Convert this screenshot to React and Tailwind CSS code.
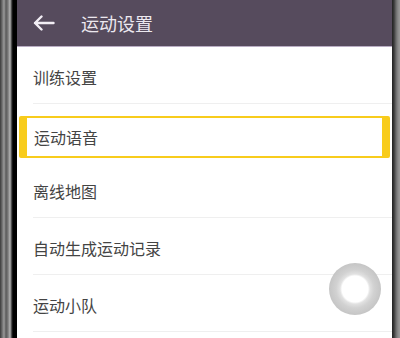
const items = ['训练设置', '运动语音', '离线地图', '自动生成运动记录', '运动小队']

export default function App() {
  return (
    <div className="flex w-[400px] h-[338px] overflow-hidden bg-black" style={{ fontFamily: '"Noto Sans CJK SC", "Noto Sans", sans-serif' }}>
      {/* left bezel */}
      <div className="w-[17px] h-full bg-[linear-gradient(to_right,#3a3a3a_0px,#6a6a6a_2px,#9a9a9a_4px,#5a5a5a_6px,#7a7a7a_8px,#b5b5b5_10px,#2a2a2a_12px,#000_13px,#000_17px)]" />

      {/* screen */}
      <div className="relative flex-1 h-full bg-white flex flex-col">
        <div className="h-[47px] shrink-0 bg-[#564b5d] border-b border-[#b9adc4] flex items-center">
          <svg className="ml-[16px]" width="22" height="16" viewBox="0 0 22 16" fill="none" stroke="#f2eef5" strokeWidth="2.4" strokeLinecap="round" strokeLinejoin="round">
            <path d="M20.5 8H2M8.5 1.5L2 8l6.5 6.5" />
          </svg>
          <span className="ml-[26px] text-[18px] text-[#ece8ef] leading-none">运动设置</span>
        </div>

        {items.map((t, i) =>
          i === 1 ? (
            <div key={t} className="h-[57px] shrink-0 flex flex-col justify-center">
              <div className="mx-[2px] h-[42px] border-[#f8cc1c] border-t-2 border-b-2 border-l-[8px] border-r-[8px] rounded-[2px] flex items-center pl-[7px] mt-[8px]">
                <span className="text-[16px] text-[#444]">{t}</span>
              </div>
            </div>
          ) : (
            <div key={t} className="h-[57px] shrink-0 ml-[16px] border-b border-[#efefef] flex items-center pt-[4px]">
              <span className="text-[16px] text-[#444]">{t}</span>
            </div>
          )
        )}

        {/* floating assist button */}
        <div className="absolute left-[312px] top-[263px] w-[52px] h-[52px] rounded-full bg-[radial-gradient(circle,#ffffff_0px,#ffffff_13px,#e0e0e0_15px,#cfcfcf_19px,#c2c2c2_26px)] opacity-95" />
      </div>

      {/* right bezel */}
      <div className="w-[8px] h-full bg-[linear-gradient(to_right,#222_0px,#3a3a3a_2px,#6a6a6a_4px,#8a8a8a_6px,#9a9a9a_8px)]" />
    </div>
  )
}
